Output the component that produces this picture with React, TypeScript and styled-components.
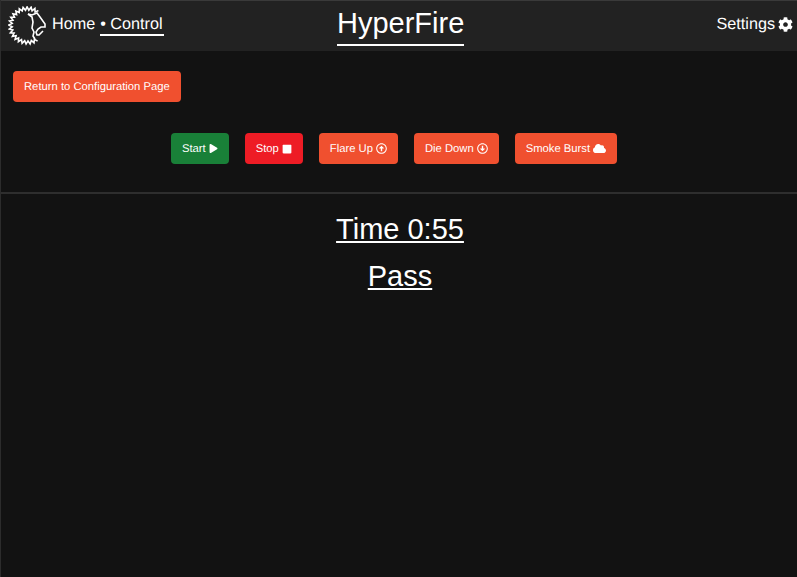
import React from "react";
import styled, { createGlobalStyle } from "styled-components";
import { FaPlay, FaStop, FaRegArrowAltCircleUp, FaRegArrowAltCircleDown, FaCloud, FaCog } from "react-icons/fa";

const Global = createGlobalStyle`
  html, body { margin: 0; padding: 0; background: #121212; }
  body { font-family: "Liberation Sans", Arial, sans-serif; color: #fff; }
`;

const Page = styled.div`
  width: 797px;
  height: 577px;
  box-sizing: border-box;
  border-left: 1px solid #2c2c2c;
  background: #121212;
  overflow: hidden;
`;

const Header = styled.header`
  height: 51px;
  box-sizing: border-box;
  border-top: 1px solid #3a3a3a;
  background: #222222;
  display: grid;
  grid-template-columns: 1fr auto 1fr;
  align-items: start;
`;

const Left = styled.div`
  display: flex;
  align-items: flex-start;
  padding: 5px 0 0 7px;
`;

const Nav = styled.nav`
  display: flex;
  align-items: flex-start;
  margin-left: 4px;
  font-size: 16.2px;
  line-height: 18px;
  padding-top: 9px;
  white-space: nowrap;
  text-rendering: geometricPrecision;
`;

const Plain = styled.span`
  margin-right: 5px;
`;

const Current = styled.span`
  display: block;
  padding: 0 1px 1px 0;
  border-bottom: 2px solid #fff;
  height: 18px;
`;

const Title = styled.h1`
  margin: 0 0 0 3px;
  padding: 6px 0 0;
  height: 37px;
  font-size: 29px;
  line-height: 33px;
  font-weight: 400;
  border-bottom: 2px solid #fff;
  width: 127px;
  text-align: center;
  white-space: nowrap;
  box-sizing: content-box;
`;

const Right = styled.div`
  display: flex;
  justify-content: flex-end;
  align-items: center;
  gap: 3px;
  padding: 14px 4px 0 0;
  font-size: 16.2px;
  line-height: 18px;
  text-rendering: geometricPrecision;
`;

const Main = styled.main`
  padding: 20px 0 0 12px;
`;

const Button = styled.button<{ $bg?: string }>`
  display: inline-flex;
  align-items: center;
  justify-content: center;
  gap: 3px;
  height: 31px;
  padding: 0 11px;
  border: none;
  border-radius: 4px;
  background: ${(p) => p.$bg ?? "#f0502f"};
  color: #fff;
  font-family: inherit;
  font-size: 11.25px;
  text-rendering: geometricPrecision;
  white-space: nowrap;
`;

const Controls = styled.div`
  display: flex;
  justify-content: center;
  gap: 16px;
  margin: 31px 0 0 -12px;
  padding-right: 10px;
`;

const Divider = styled.hr`
  margin: 28px 0 0 -12px;
  height: 2px;
  border: none;
  background: #2e2e2e;
`;

const Status = styled.div`
  text-align: center;
  margin: 19px 0 0 -10px;
`;

const Line = styled.div`
  font-size: 29px;
  line-height: 33px;
  margin-bottom: 14px;
  text-decoration: underline;
  text-decoration-thickness: 2px;
  text-underline-offset: 2px;
`;

function burst() {
  const cx = 27.5, cy = 25.5, teeth = 20, start = -54, span = -249;
  const pts: string[] = [];
  for (let i = 0; i <= teeth * 2; i++) {
    const a = ((start + (i / (teeth * 2)) * span) * Math.PI) / 180;
    const r = i % 2 ? 15.4 : 18.6;
    pts.push(`${(cx + r * Math.cos(a)).toFixed(1)},${(cy + r * Math.sin(a)).toFixed(1)}`);
  }
  return pts.join(" ");
}

function Logo() {
  return (
    <svg width="40" height="40" viewBox="8 6 40 40" fill="none" stroke="#fff" strokeWidth="1.6" strokeLinejoin="miter">
      <polyline points={burst()} />
      <path d="M28 14l4 1 5-2 3 4 5 7 0 3h-4l-3 2-2 3 1 3 2 0 4-4" />
      <path d="M28 14l4 3 1 5-1 6 2 4-1 4 2 3" />
    </svg>
  );
}

export default function App() {
  return (
    <Page>
      <Global />
      <Header>
        <Left>
          <Logo />
          <Nav>
            <Plain>Home</Plain>
            <Current>• Control</Current>
          </Nav>
        </Left>
        <Title>HyperFire</Title>
        <Right>
          Settings <FaCog size={15} />
        </Right>
      </Header>
      <Main>
        <Button>Return to Configuration Page</Button>
        <Controls>
          <Button $bg="#198038">Start <FaPlay size={9} /></Button>
          <Button $bg="#ee1c25">Stop <FaStop size={10} /></Button>
          <Button>Flare Up <FaRegArrowAltCircleUp size={11} /></Button>
          <Button>Die Down <FaRegArrowAltCircleDown size={11} /></Button>
          <Button>Smoke Burst <FaCloud size={13} /></Button>
        </Controls>
        <Divider />
        <Status>
          <Line>Time 0:55</Line>
          <Line>Pass</Line>
        </Status>
      </Main>
    </Page>
  );
}
